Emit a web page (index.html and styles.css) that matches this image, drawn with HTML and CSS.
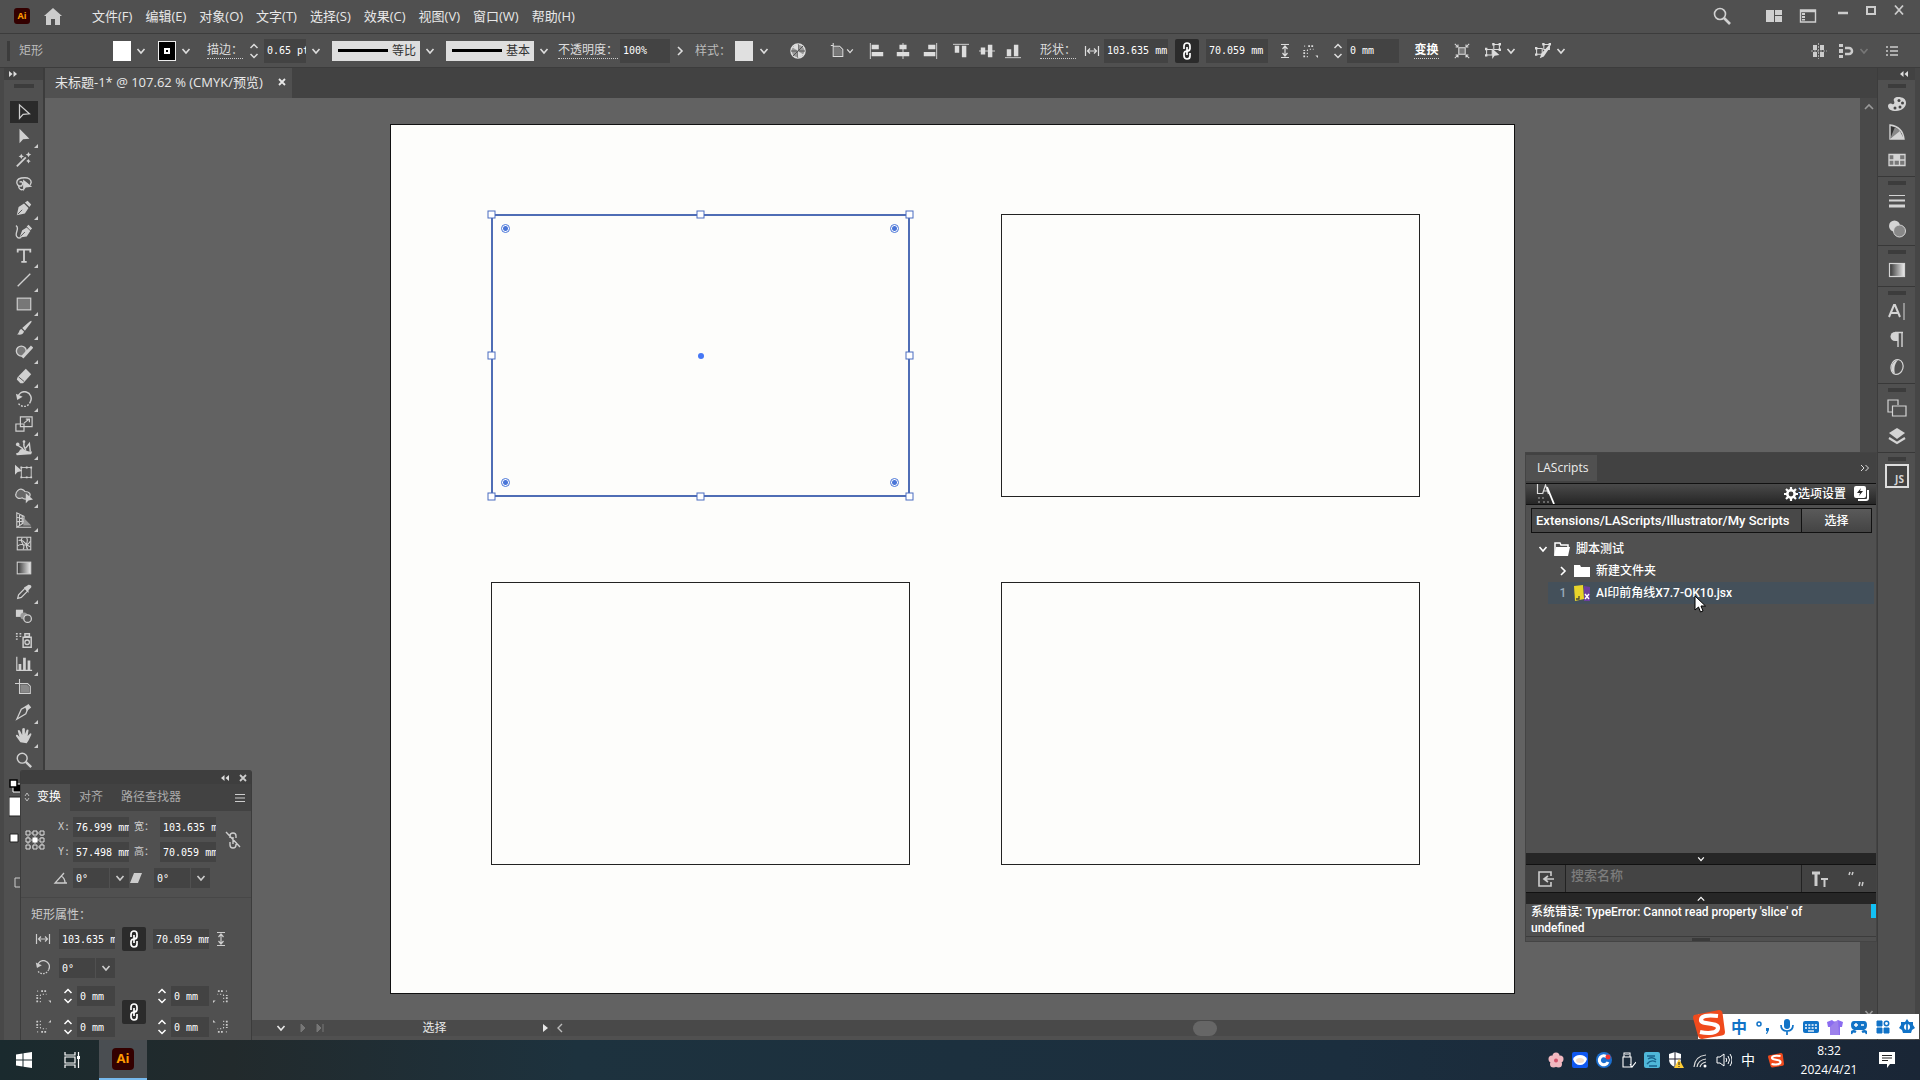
FILE: index.html
```html
<!DOCTYPE html>
<html lang="zh-CN">
<head>
<meta charset="utf-8">
<title>未标题-1* @ 107.62 % (CMYK/预览)</title>
<link rel="stylesheet" href="styles.css">
</head>
<body>
<svg class="sprite" aria-hidden="true">
  <symbol id="down" viewBox="0 0 10 10"><path d="M1.500 3l3.500 4L8.500 3" fill="none" stroke="currentColor" stroke-width="1.600"/></symbol>
  <symbol id="right" viewBox="0 0 10 10"><path d="M3 1l4 4-4 4" fill="none" stroke="currentColor" stroke-width="1.600"/></symbol>
  <symbol id="left" viewBox="0 0 10 10"><path d="M7 1L3 5l4 4" fill="none" stroke="currentColor" stroke-width="1.400"/></symbol>
  <symbol id="up" viewBox="0 0 10 10"><path d="M1 7l4-4 4 4" fill="none" stroke="currentColor" stroke-width="1.600"/></symbol>
  <symbol id="step" viewBox="0 0 10 16"><path d="M1.500 5L5 1.500 8.500 5M1.500 11L5 14.500 8.500 11" fill="none" stroke="currentColor" stroke-width="1.500"/></symbol>
  <symbol id="dleft" viewBox="0 0 10 8"><path d="M4.500 1v6L1 4zM9 1v6L5.500 4z" fill="currentColor"/></symbol>
  <symbol id="dright" viewBox="0 0 10 8"><path d="M1 1v6l3.500-3zM5.500 1v6L9 4z" fill="currentColor"/></symbol>
  <symbol id="dright-open" viewBox="0 0 10 8"><path d="M1 1l3 3-3 3M5.500 1l3 3-3 3" fill="none" stroke="currentColor"/></symbol>
  <symbol id="close" viewBox="0 0 10 10"><path d="M2 2l6 6M8 2L2 8" fill="none" stroke="currentColor" stroke-width="1.800"/></symbol>
  <symbol id="link" viewBox="0 0 12 20"><path d="M3 8V5a3 3 0 016 0v2.500a3 3 0 01-3 2.500M9 12v3a3 3 0 01-6 0v-2.500A3 3 0 016 10M6 6v8" fill="none" stroke="currentColor" stroke-width="1.700"/></symbol>
  <symbol id="w" viewBox="0 0 16 12"><path d="M1.500 1v10M14.500 1v10M3 6h10M6 3.500L3.500 6 6 8.500M10 3.500L12.500 6 10 8.500" fill="none" stroke="currentColor" stroke-width="1.200"/></symbol>
  <symbol id="h" viewBox="0 0 12 16"><path d="M2 1.500h8M2 14.500h8M6 3v10M3.500 6L6 3l2.500 3M3.500 10L6 13l2.500-3" fill="none" stroke="currentColor" stroke-width="1.200"/></symbol>
  <symbol id="corner" viewBox="0 0 18 16"><path d="M2.500 15V7M7 2.500h7" fill="none" stroke="currentColor" stroke-width="2" stroke-dasharray="2 1.500"/><path d="M2.500 2.500h1M6 15V8q0-2 2-2h5" fill="none" stroke="currentColor" stroke-width="1.200" stroke-dasharray="1.500 2"/><path d="M15 13h3v3z" fill="currentColor"/></symbol>
  <symbol id="mag" viewBox="0 0 20 20"><circle cx="8" cy="8" r="5.500" fill="none" stroke="currentColor" stroke-width="1.600"/><path d="M12 12l6 6" stroke="currentColor" stroke-width="2.600"/></symbol>
  <symbol id="rot" viewBox="0 0 20 20"><path d="M3 8a7.500 7.500 0 1114 4" fill="none" stroke="currentColor" stroke-width="1.600"/><path d="M17 12a7.500 7.500 0 01-13.500 1.500" fill="none" stroke="currentColor" stroke-width="1.500" stroke-dasharray="2 1.500"/><path d="M1 3l1.500 7 6-3.500z" fill="currentColor"/></symbol>
  <symbol id="sogou" viewBox="0 0 32 30"><path d="M1 6L26 1q3 0 3.500 3L32 23q0 3-3 3.500L9 30q-3 0-4-3L0 9q0-2 1-3z" fill="#f04a1c"/><path d="M25 7Q8 5 8 11c0 5 17 2 17 8 0 5-9 6-18 4" fill="none" stroke="#fff" stroke-width="4.200"/></symbol>
  <symbol id="t-sel" viewBox="0 0 20 20"><path d="M5 2v15l4-4.500 7-.5z" fill="none" stroke="currentColor" stroke-width="1.400"/></symbol>
  <symbol id="t-dir" viewBox="0 0 20 20"><path d="M5 2v16l4-4.500 7-.5z" fill="currentColor"/></symbol>
  <symbol id="t-wand" viewBox="0 0 20 20"><path d="M2 17L12 7" stroke="currentColor" stroke-width="2"/><path d="M7 3l1 2 2 1-2 1-1 2-1-2-2-1 2-1zM15 1l1 2 2 1-2 1-1 2-1-2-2-1 2-1zM15 9l1 1.500 1.500 1L16 12l-1 2-1-2-1.500-1 1.500-1z" fill="currentColor"/></symbol>
  <symbol id="t-lasso" viewBox="0 0 20 20"><path d="M8 12c-4 1-6-1-6-4C2 4 7 3 11 3s7 2 7 5l-1 3M5 8c3-2 5 2 2 4M4 12c0 4 3 5 5 4" fill="none" stroke="currentColor" stroke-width="1.500"/><path d="M9 5v13l3-4 7-1z" fill="currentColor"/></symbol>
  <symbol id="t-pen" viewBox="0 0 20 20"><path d="M2 18l2-9 6-4 5 5-4 6zM11 4l3-2 4 4-2 3z" fill="currentColor"/><path d="M3 17l5-5" stroke="#4d4d4d"/></symbol>
  <symbol id="t-curv" viewBox="0 0 20 20"><path d="M5 16l3-8 5-3 4 4-4 6zM13 4l2-2 4 4-2 2z" fill="currentColor"/><path d="M1 3c5 2-2 9 1 12 1 2 3 2 5 1" fill="none" stroke="currentColor" stroke-width="1.500"/><path d="M6 15l5-5" stroke="#4d4d4d"/></symbol>
  <symbol id="t-type" viewBox="0 0 20 20"><path d="M3 6V3h14v3M10 3v13M7 16.500h6" fill="none" stroke="currentColor" stroke-width="2"/></symbol>
  <symbol id="t-line" viewBox="0 0 20 20"><path d="M3 17L17 3" stroke="currentColor" stroke-width="1.500"/></symbol>
  <symbol id="t-rect" viewBox="0 0 20 20"><rect x="2.500" y="3.500" width="15" height="13" fill="#777" stroke="currentColor" stroke-width="1.300"/></symbol>
  <symbol id="t-brush" viewBox="0 0 20 20"><path d="M18 2q1 0 0 2l-7 9-3-3 8-7zM7 11l3 3c-1 4-5 4-8 3 3-1 2-5 5-6z" fill="currentColor"/></symbol>
  <symbol id="t-shaper" viewBox="0 0 20 20"><circle cx="7" cy="9" r="5.500" fill="#777" stroke="currentColor" stroke-width="1.500"/><path d="M8 16L19 4" stroke="currentColor" stroke-width="3.500"/></symbol>
  <symbol id="t-eraser" viewBox="0 0 20 20"><path d="M3 11L12 2l6 6-9 10H6l-4-4z" fill="currentColor"/><path d="M4 11l6 5" stroke="#4d4d4d"/></symbol>
  <symbol id="t-scale" viewBox="0 0 20 20"><path d="M6 2h13v11H6zM1 10h9v8H1z" fill="none" stroke="currentColor" stroke-width="1.300"/><path d="M10 9l5-4M12 4.500h4V8" fill="none" stroke="currentColor" stroke-width="1.300"/></symbol>
  <symbol id="t-width" viewBox="0 0 20 20"><path d="M1 16c5-1 3-5 7-5s3 3 11 3l-1 3-16 1z" fill="currentColor"/><path d="M3 7l6 4M10 4q-1 4 2 8M12 10l4-5 1 9" stroke="currentColor" stroke-width="1.500" fill="none"/><circle cx="3" cy="6" r="2" fill="currentColor"/><circle cx="10" cy="3" r="1.500" fill="currentColor"/></symbol>
  <symbol id="t-free" viewBox="0 0 20 20"><path d="M0 2v11l3-3 5-1z" fill="currentColor"/><rect x="7" y="5" width="11" height="11" fill="none" stroke="currentColor"/><path d="M6 4h2v2H6zM17 4h2v2h-2zM6 15h2v2H6zM17 15h2v2h-2zM12 4h2v2h-2zM12 15h2v2h-2z" fill="currentColor"/></symbol>
  <symbol id="t-shape" viewBox="0 0 20 20"><path d="M3 4c3-3 7-1 8 1 5 0 7 3 5 6s-6 3-8 1c-4 2-8-1-7-4 0-2 1-3 2-4z" fill="#666" stroke="currentColor" stroke-width="1.300"/><path d="M12 7v11l3-3 5-1z" fill="currentColor"/></symbol>
  <symbol id="t-persp" viewBox="0 0 20 20"><path d="M2 2v16l8-5V6zM2 7l8 2M2 12l8-1M5 3v13M8 5v9M2 18h16" fill="none" stroke="currentColor" stroke-width="1.200"/><path d="M11 9l7 7h-9z" fill="#999"/></symbol>
  <symbol id="t-mesh" viewBox="0 0 20 20"><rect x="2.500" y="2.500" width="15" height="14" fill="none" stroke="currentColor" stroke-width="1.200"/><path d="M3 12c5-5 9 4 14-5M4 6c7-2 6 5 13 7M8 3c-4 6 5 7 1 13M13 3c3 5-3 7 1 13" fill="none" stroke="currentColor" stroke-width="1.200"/></symbol>
  <linearGradient id="g1"><stop offset="0" stop-color="#333"/><stop offset="1" stop-color="#eee"/></linearGradient>
  <symbol id="t-grad" viewBox="0 0 20 20"><rect x="2.500" y="3.500" width="15" height="13" fill="url(#g1)" stroke="currentColor" stroke-width="1.200"/></symbol>
  <symbol id="t-drop" viewBox="0 0 20 20"><path d="M3 17l1-4 7-7 3 3-7 7z" fill="none" stroke="currentColor" stroke-width="1.400"/><path d="M10 5l2-1 3-2q4 0 3 3l-3 3v3z" fill="currentColor"/></symbol>
  <symbol id="t-blend" viewBox="0 0 20 20"><path d="M1 3h8v8H1z" fill="currentColor"/><circle cx="10" cy="10" r="4" fill="#999"/><circle cx="14" cy="13" r="4.200" fill="#555" stroke="currentColor" stroke-width="1.400"/></symbol>
  <symbol id="t-spray" viewBox="0 0 20 20"><path d="M9 7h9v11H9zM11 3h5v3h-5z" fill="none" stroke="currentColor" stroke-width="1.600"/><circle cx="13.500" cy="12.500" r="2.500" fill="none" stroke="currentColor" stroke-width="1.400"/><path d="M1 3h2M5 3h2M1 6h2M5 6h2M1 9h2" stroke="currentColor" stroke-width="1.500"/></symbol>
  <symbol id="t-graph" viewBox="0 0 20 20"><path d="M2 2v15h17" fill="none" stroke="currentColor" stroke-width="1.300"/><path d="M4 10h3v7H4zM9 3h3v14H9zM14 6h3v11h-3z" fill="currentColor"/></symbol>
  <symbol id="t-art" viewBox="0 0 20 20"><path d="M5 0v16h12V8l-3-3H0" fill="none" stroke="currentColor" stroke-width="1.200"/><path d="M6 6h7l3 3v6H6z" fill="#888"/></symbol>
  <symbol id="t-slice" viewBox="0 0 20 20"><path d="M2 18l5-11 5-3 2 3-2 5z" fill="none" stroke="currentColor" stroke-width="1.400"/><path d="M11 4l4-3 3 4-5 4z" fill="currentColor"/></symbol>
  <symbol id="t-hand" viewBox="0 0 20 20"><path d="M6 17L1 10q0-2 2-1l2 2L3 4q2-2 3 1l2 4V2q2-2 3 0v6l2-5q2-1 2 1l-1 6 3-3q2 0 1 2l-3 6-2 3z" fill="currentColor"/></symbol>
  <symbol id="win" viewBox="0 0 16 16"><path d="M0 2.500L6.500 1.500V7.500H0zM7.500 1.300L16 0v7.500H7.500zM0 8.500h6.500v6L0 13.500zM7.500 8.500H16V16l-8.500-1.300z" fill="#fff"/></symbol>
  <symbol id="folder" viewBox="0 0 16 14"><path d="M0 1h6l1 2h9v10H0z" fill="currentColor"/></symbol>
  <symbol id="doc" viewBox="0 0 20 20"><path d="M1 3h3M4 0v17h12V8l-4-4H4" fill="none" stroke="currentColor" stroke-width="1.300"/><path d="M5 5h6l4 4v7H5z" fill="#777"/></symbol>
  <symbol id="al" viewBox="0 0 18 18"><path d="M1.500 0v18" stroke="currentColor"/><path d="M3 2h8v5H3zM3 10h13v5H3z" fill="currentColor"/></symbol>
  <symbol id="ac" viewBox="0 0 18 18"><path d="M9 0v18" stroke="currentColor"/><path d="M5 2h8v5H5zM2 10h14v5H2z" fill="currentColor"/></symbol>
  <symbol id="nodes" viewBox="0 0 20 20"><path d="M6 6h8v8H6z" fill="#777" stroke="currentColor" stroke-width="1.300"/><path d="M1 1l4 4M19 1l-4 4M1 19l4-4M19 19l-4-4M2 5h3V2M18 5h-3V2M2 15h3v3M18 15h-3v3" fill="none" stroke="currentColor" stroke-width="1.300"/></symbol>
  <symbol id="iso" viewBox="0 0 20 20"><path d="M2 8h7v7H2zM11 2h7v6h-7z" fill="none" stroke="currentColor" stroke-width="1.300"/><path d="M0 6h3v3H0zM0 14h3v3H0zM9 0h3v3H9zM17 0h3v3h-3zM17 7h3v3h-3zM9 7v13l3-4 6-1z" fill="currentColor"/></symbol>
  <symbol id="edit" viewBox="0 0 20 20"><path d="M2 7h7v7H2zM11 2h7v6h-7z" fill="none" stroke="currentColor" stroke-width="1.300"/><path d="M0 5h3v3H0zM0 13h3v3H0zM9 0h3v3H9zM17 0h3v3h-3zM6 19l2-6 9-10 2 2-8 12z" fill="currentColor"/></symbol>
</svg>

<header class="menubar">
  <span class="ai small">Ai</span>
  <button class="plain home" aria-label="主页"><svg viewBox="0 0 20 18" class="i20"><path d="M10 1L1 9h2v9h5v-6h4v6h5V9h2z" fill="#ccc"/></svg></button>
  <nav class="menus">
    <button class="plain">文件(F)</button><button class="plain">编辑(E)</button><button class="plain">对象(O)</button><button class="plain">文字(T)</button><button class="plain">选择(S)</button><button class="plain">效果(C)</button><button class="plain">视图(V)</button><button class="plain">窗口(W)</button><button class="plain">帮助(H)</button>
  </nav>
  <div class="menu-right">
    <button class="plain search" aria-label="搜索"><svg class="i20"><use href="#mag"/></svg></button>
    <button class="plain" aria-label="排列文档"><svg class="i20" viewBox="0 0 20 20"><path d="M2 4h8v12H2zM11 4h7v5h-7zM11 10h7v6h-7z" fill="currentColor"/></svg></button>
    <button class="plain" aria-label="工作区"><svg class="i20" viewBox="0 0 20 20"><path d="M2.500 4h15v12h-15zM2 5.500h16" fill="none" stroke="currentColor" stroke-width="1.400"/><path d="M4 7h3v2H4zM4 10h3v2H4zM4 13h3v1.500H4z" fill="currentColor"/></svg></button>
  </div>
  <div class="win-buttons">
    <button class="plain" aria-label="最小化"><svg class="i12" viewBox="0 0 12 12"><path d="M1 9h10" stroke="currentColor" stroke-width="2.500"/></svg></button>
    <button class="plain" aria-label="最大化"><svg class="i12" viewBox="0 0 12 12"><rect x="2" y="3" width="8" height="7" fill="none" stroke="currentColor" stroke-width="2"/></svg></button>
    <button class="plain" aria-label="关闭"><svg class="i12" viewBox="0 0 12 12"><path d="M2 1.500l8 9M10 1.500l-8 9" stroke="currentColor" stroke-width="1.800"/></svg></button>
  </div>
</header>

<section class="controlbar" aria-label="控制">
  <span class="grip-v"></span>
  <span class="dim">矩形</span>
  <button class="swatch" aria-label="填色"></button>
  <button class="plain chev" aria-label="填色菜单"><svg class="i10"><use href="#down"/></svg></button>
  <button class="swatch stroke" aria-label="描边颜色"></button>
  <button class="plain chev" aria-label="描边颜色菜单"><svg class="i10"><use href="#down"/></svg></button>
  <label class="dotted" for="sw">描边：</label>
  <button class="plain" aria-label="调整粗细"><svg class="step"><use href="#step"/></svg></button>
  <input id="sw" class="field" value="0.65 pt">
  <button class="plain chev" aria-label="粗细菜单"><svg class="i10"><use href="#down"/></svg></button>
  <select class="profile" aria-label="宽度配置"><option>等比</option></select>
  <svg class="i10 chev"><use href="#down"/></svg>
  <select class="profile" aria-label="画笔"><option>基本</option></select>
  <svg class="i10 chev"><use href="#down"/></svg>
  <label class="dotted" for="op">不透明度：</label>
  <input id="op" class="field" value="100%">
  <button class="plain chev" aria-label="不透明度滑块"><svg class="i10"><use href="#right"/></svg></button>
  <span class="dim">样式：</span>
  <button class="swatch style" aria-label="图形样式"></button>
  <button class="plain chev" aria-label="样式菜单"><svg class="i10"><use href="#down"/></svg></button>
  <button class="plain" aria-label="重新着色"><svg class="i16" viewBox="0 0 16 16"><circle cx="8" cy="8" r="7" fill="#999" stroke="currentColor" stroke-width="1.500"/><path d="M8 1v14M1 8h14M3 3l10 10M13 3L3 13" stroke="#555"/><path d="M8 8L2 4 8 1zM8 8l6 4-6 3z" fill="currentColor"/></svg></button>
  <button class="plain" aria-label="对齐到"><svg class="i16"><use href="#doc"/></svg><svg class="i8"><use href="#down"/></svg></button>
  <button class="plain" aria-label="左对齐"><svg class="i16"><use href="#al"/></svg></button>
  <button class="plain" aria-label="水平居中"><svg class="i16"><use href="#ac"/></svg></button>
  <button class="plain" aria-label="右对齐"><svg class="i16 flip-h"><use href="#al"/></svg></button>
  <button class="plain" aria-label="顶对齐"><svg class="i16 turn"><use href="#al"/></svg></button>
  <button class="plain" aria-label="垂直居中"><svg class="i16 turn"><use href="#ac"/></svg></button>
  <button class="plain" aria-label="底对齐"><svg class="i16 turn-b"><use href="#al"/></svg></button>
  <label class="dotted" for="sh">形状：</label>
  <svg class="i16"><use href="#w"/></svg>
  <input id="sh" class="field" value="103.635 mm">
  <button class="linkbtn" aria-label="约束比例"><svg class="lk"><use href="#link"/></svg></button>
  <input class="field" aria-label="高度" value="70.059 mm">
  <svg class="i16 mid"><use href="#h"/></svg>
  <svg class="i16"><use href="#corner"/></svg>
  <button class="plain" aria-label="调整圆角"><svg class="step"><use href="#step"/></svg></button>
  <input class="field" aria-label="圆角半径" value="0 mm">
  <button class="plain dotted bright mid">变换</button>
  <button class="plain" aria-label="边界"><svg class="i16"><use href="#nodes"/></svg></button>
  <button class="plain pair" aria-label="隔离"><svg class="i16"><use href="#iso"/></svg><svg class="i10"><use href="#down"/></svg></button>
  <button class="plain pair" aria-label="编辑"><svg class="i16"><use href="#edit"/></svg><svg class="i10"><use href="#down"/></svg></button>
  <span class="cb-right">
    <button class="plain" aria-label="像素网格"><svg class="i16" viewBox="0 0 16 16"><path d="M2 2h4v5H2zM9 2h4v5H9zM2 9h4v5H2zM9 9h4v5H9z" fill="currentColor"/><path d="M7.500 0v16M0 8h16" stroke="currentColor" stroke-dasharray="2 1" opacity=".7"/></svg></button>
    <button class="plain pair" aria-label="对齐像素"><svg class="i16" viewBox="0 0 16 16"><path d="M1 1h4v3H1zM1 6h4v4H1zM1 12h4v3H1z" fill="currentColor"/><path d="M7 5h4a3 3 0 010 6H7" fill="none" stroke="currentColor" stroke-width="2.500"/></svg><svg class="i10 faint"><use href="#down"/></svg></button>
    <button class="plain" aria-label="菜单"><svg class="i12" viewBox="0 0 12 12"><path d="M0 2h2M4 2h8M0 6h2M4 6h8M0 10h2M4 10h8" stroke="currentColor" stroke-width="1.500"/></svg></button>
  </span>
</section>

<main class="workspace">
  <aside class="toolbar" aria-label="工具">
    <div class="bar-head"><svg class="dbl"><use href="#dright"/></svg></div>
    <span class="grip"></span>
    <div class="tools">
      <button class="tool on" aria-label="选择工具"><svg><use href="#t-sel"/></svg></button>
      <button class="tool more" aria-label="直接选择"><svg><use href="#t-dir"/></svg></button>
      <button class="tool" aria-label="魔棒"><svg><use href="#t-wand"/></svg></button>
      <button class="tool" aria-label="套索"><svg><use href="#t-lasso"/></svg></button>
      <button class="tool more" aria-label="钢笔"><svg><use href="#t-pen"/></svg></button>
      <button class="tool" aria-label="曲率"><svg><use href="#t-curv"/></svg></button>
      <button class="tool more" aria-label="文字"><svg><use href="#t-type"/></svg></button>
      <button class="tool more" aria-label="直线段"><svg><use href="#t-line"/></svg></button>
      <button class="tool more" aria-label="矩形"><svg><use href="#t-rect"/></svg></button>
      <button class="tool more" aria-label="画笔"><svg><use href="#t-brush"/></svg></button>
      <button class="tool more" aria-label="Shaper"><svg><use href="#t-shaper"/></svg></button>
      <button class="tool more" aria-label="橡皮擦"><svg><use href="#t-eraser"/></svg></button>
      <button class="tool more" aria-label="旋转"><svg><use href="#rot"/></svg></button>
      <button class="tool more" aria-label="比例缩放"><svg><use href="#t-scale"/></svg></button>
      <button class="tool more" aria-label="宽度"><svg><use href="#t-width"/></svg></button>
      <button class="tool more" aria-label="自由变换"><svg><use href="#t-free"/></svg></button>
      <button class="tool more" aria-label="形状生成器"><svg><use href="#t-shape"/></svg></button>
      <button class="tool more" aria-label="透视网格"><svg><use href="#t-persp"/></svg></button>
      <button class="tool" aria-label="网格"><svg><use href="#t-mesh"/></svg></button>
      <button class="tool" aria-label="渐变"><svg><use href="#t-grad"/></svg></button>
      <button class="tool more" aria-label="吸管"><svg><use href="#t-drop"/></svg></button>
      <button class="tool" aria-label="混合"><svg><use href="#t-blend"/></svg></button>
      <button class="tool more" aria-label="符号喷枪"><svg><use href="#t-spray"/></svg></button>
      <button class="tool more" aria-label="柱形图"><svg><use href="#t-graph"/></svg></button>
      <button class="tool" aria-label="画板"><svg><use href="#t-art"/></svg></button>
      <button class="tool more" aria-label="切片"><svg><use href="#t-slice"/></svg></button>
      <button class="tool more" aria-label="抓手"><svg><use href="#t-hand"/></svg></button>
      <button class="tool" aria-label="缩放"><svg><use href="#mag"/></svg></button>
    </div>
    <svg class="colors" viewBox="0 0 30 130"><path d="M4 8h8v8H4z" fill="#000" stroke="#fff"/><path d="M1 4h7v7H1z" fill="#fff" stroke="#000" stroke-width="1.500"/><path d="M0 21h22v19H0z" fill="#fff" stroke="#222"/><path d="M1 58h8v8H1z" fill="#fff" stroke="#222"/><path d="M6 102h12v9H6z" fill="none" stroke="#ccc"/></svg>
  </aside>

  <section class="document">
    <div class="tabs">
      <div class="tab"><span>未标题-1* @ 107.62 % (CMYK/预览)</span><button class="plain" aria-label="关闭文档"><svg class="i10"><use href="#close"/></svg></button></div>
    </div>
    <div class="view">
      <div class="canvas">
        <div class="artboard">
          <div class="shape a selected">
            <svg class="handles" aria-hidden="true">
              <g class="hn">
                <rect x="0" y="0" width="7" height="7"/><rect x="50%" y="0" width="7" height="7"/><rect x="100%" y="0" width="7" height="7"/>
                <rect x="0" y="50%" width="7" height="7"/><rect x="100%" y="50%" width="7" height="7"/>
                <rect x="0" y="100%" width="7" height="7"/><rect x="50%" y="100%" width="7" height="7"/><rect x="100%" y="100%" width="7" height="7"/>
              </g>
              <circle class="mid-dot" cx="50%" cy="50%" r="3"/>
            </svg>
            <i class="widget tl"></i><i class="widget tr"></i><i class="widget bl"></i><i class="widget br"></i>
          </div>
          <div class="shape b"></div>
          <div class="shape c"></div>
          <div class="shape d"></div>
        </div>
      </div>
      <div class="vscroll"><svg class="i10"><use href="#up"/></svg><svg class="i10"><use href="#down"/></svg></div>
    </div>
    <footer class="status">
      <div class="status-info"><svg class="i10"><use href="#down"/></svg><svg class="nav2" viewBox="0 0 30 10"><path d="M3 1v8l4-4zM19 1v8l4-4zM25 1v8" fill="#777" stroke="#777"/></svg><span class="status-text">选择</span><svg class="i10" viewBox="0 0 10 10"><path d="M2 1l5 4-5 4z" fill="currentColor"/></svg></div>
      <div class="hscroll"><svg class="i10 dim"><use href="#left"/></svg><span class="thumb"></span></div>
    </footer>
  </section>

  <aside class="dock" aria-label="面板">
    <div class="bar-head end"><svg class="dbl"><use href="#dleft"/></svg></div>
    <div class="dock-group">
      <button class="plain" aria-label="颜色"><svg class="i20" viewBox="0 0 20 20"><path d="M11 3c5 0 8 2 8 6s-4 8-10 8c-5 0-8-2-8-5 0-2 2-3 4-2s3-1 2-3 1-4 4-4z" fill="currentColor"/><circle cx="12" cy="6.500" r="1.500" fill="#444"/><circle cx="15.500" cy="9" r="1.500" fill="#444"/><circle cx="13" cy="13" r="1.500" fill="#444"/><circle cx="8" cy="14" r="1.500" fill="#444"/></svg></button>
      <button class="plain" aria-label="颜色参考"><svg class="i20" viewBox="0 0 20 20"><path d="M3 3v14h14C16 9 11 4 3 3z" fill="#333" stroke="currentColor" stroke-width="1.400"/><path d="M3 17L12 7l5 10z" fill="currentColor"/><path d="M3 17l5-12 5 4z" fill="#888"/></svg></button>
      <button class="plain" aria-label="色板"><svg class="i20" viewBox="0 0 20 20"><path d="M2 4.500h16v11H2z" fill="#777" stroke="currentColor" stroke-width="1.300"/><path d="M7 5v10M12.500 5v10M2 10h16" stroke="currentColor" stroke-width="1.300"/><path d="M7 5h5v5H7z" fill="currentColor"/></svg></button>
    </div>
    <div class="dock-group">
      <button class="plain" aria-label="描边"><svg class="i20" viewBox="0 0 20 20"><path d="M2 4.500h16" stroke="currentColor"/><path d="M2 9.500h16" stroke="currentColor" stroke-width="2"/><path d="M2 15h16" stroke="currentColor" stroke-width="3"/></svg></button>
      <button class="plain" aria-label="透明度"><svg class="i20" viewBox="0 0 20 20"><circle cx="7.500" cy="7" r="5.500" fill="currentColor"/><circle cx="12.500" cy="12" r="6" fill="#888" stroke="currentColor"/></svg></button>
    </div>
    <div class="dock-group">
      <button class="plain" aria-label="渐变"><svg class="i20" viewBox="0 0 20 20"><use href="#t-grad"/></svg></button>
    </div>
    <div class="dock-group">
      <button class="plain" aria-label="字符"><svg class="i20" viewBox="0 0 20 20"><path d="M2 16L7 4h1l5 12M4 12h7" fill="none" stroke="currentColor" stroke-width="2"/><path d="M17 2v17" stroke="currentColor"/></svg></button>
      <button class="plain" aria-label="段落"><svg class="i20" viewBox="0 0 20 20"><path d="M11 3v15M15 3v15M8 3.500h8" fill="none" stroke="currentColor" stroke-width="1.400"/><path d="M11 3H8a4 4 0 000 9h3z" fill="currentColor"/></svg></button>
      <button class="plain" aria-label="OpenType"><svg class="i20" viewBox="0 0 20 20"><ellipse cx="10" cy="10" rx="6" ry="7.500" transform="rotate(15 10 10)" fill="none" stroke="currentColor" stroke-width="1.200"/><path d="M11 3C4 4 2 14 8 17 7 12 7 8 11 3z" fill="currentColor"/></svg></button>
    </div>
    <div class="dock-group">
      <button class="plain" aria-label="画板"><svg class="i20" viewBox="0 0 20 20"><path d="M5 14H1V2h10v5M5.500 8H19v10H5.500z" fill="none" stroke="currentColor" stroke-width="1.200"/></svg></button>
      <button class="plain" aria-label="图层"><svg class="i20" viewBox="0 0 20 20"><path d="M10 2l8 5-8 6-8-6z" fill="currentColor"/><path d="M2 12l8 5 8-5" fill="none" stroke="currentColor" stroke-width="2.200"/></svg></button>
    </div>
    <div class="dock-group">
      <button class="js" aria-label="LAScripts">JS</button>
    </div>
  </aside>
</main>

<section class="transform-panel" aria-label="变换面板">
  <div class="tp-head"><svg class="dbl"><use href="#dleft"/></svg><button class="plain" aria-label="关闭面板"><svg class="i10"><use href="#close"/></svg></button></div>
  <div class="tp-tabs">
    <button class="tp-tab on"><svg class="ud" viewBox="0 0 6 10"><path d="M1 4l2-3 2 3M1 6l2 3 2-3" fill="none" stroke="#bbb"/></svg>变换</button>
    <button class="tp-tab">对齐</button>
    <button class="tp-tab">路径查找器</button>
    <button class="plain tp-menu" aria-label="面板菜单"><svg class="i10" viewBox="0 0 10 10"><path d="M0 1.500h10M0 5h10M0 8.500h10" stroke="currentColor"/></svg></button>
  </div>
  <div class="tp-pos">
    <svg class="i20" viewBox="0 0 20 20"><path d="M3 3h14v14H3zM10 3v14M3 10h14" fill="none" stroke="#ccc" stroke-dasharray="2 1"/><g fill="#505050" stroke="#ddd"><path d="M1 1h4v4H1zM8 1h4v4H8zM15 1h4v4h-4zM1 8h4v4H1zM15 8h4v4h-4zM1 15h4v4H1zM8 15h4v4H8zM15 15h4v4h-4z"/></g><path d="M7.500 7.500h5v5h-5z" fill="#fff"/></svg>
    <div class="pos-grid">
      <label for="px">X:</label><input id="px" class="field" value="76.999 mm"><label for="pw">宽：</label><input id="pw" class="field" value="103.635 mm">
      <label for="py">Y:</label><input id="py" class="field" value="57.498 mm"><label for="ph">高：</label><input id="ph" class="field" value="70.059 mm">
    </div>
    <button class="plain unlink" aria-label="取消约束"><svg class="i20" viewBox="0 0 20 20"><path d="M7 8V6a3 3 0 016 0v2M13 12v3a3 3 0 01-6 0v-3M10 7v7M3 2l14 15" fill="none" stroke="#ccc" stroke-width="1.400"/></svg></button>
  </div>
  <div class="tp-angle">
    <svg class="i16" viewBox="0 0 16 16"><path d="M14 13H2L11 3M8 6q4 2 4 7" fill="none" stroke="#ccc" stroke-width="1.300"/></svg>
    <span class="combo"><input class="field" aria-label="角度" value="0°"><button class="plain" aria-label="角度菜单"><svg class="i10"><use href="#down"/></svg></button></span>
    <svg class="i16" viewBox="0 0 16 16"><path d="M5 3h8L9 13H1z" fill="#ccc"/></svg>
    <span class="combo"><input class="field" aria-label="倾斜" value="0°"><button class="plain" aria-label="倾斜菜单"><svg class="i10"><use href="#down"/></svg></button></span>
  </div>
  <h2 class="tp-title">矩形属性：</h2>
  <div class="tp-props">
    <svg class="i16"><use href="#w"/></svg><input class="field" aria-label="矩形宽" value="103.635 mm">
    <button class="linkbtn" aria-label="约束宽高"><svg class="lk"><use href="#link"/></svg></button>
    <input class="field" aria-label="矩形高" value="70.059 mm"><svg class="i16"><use href="#h"/></svg>
    <svg class="i16"><use href="#rot"/></svg><span class="combo"><input class="field" aria-label="矩形角度" value="0°"><button class="plain" aria-label="矩形角度菜单"><svg class="i10"><use href="#down"/></svg></button></span>
  </div>
  <div class="tp-corners">
    <svg class="i16"><use href="#corner"/></svg><span class="radius"><svg class="step"><use href="#step"/></svg><input class="field" aria-label="左上" value="0 mm"></span>
    <button class="linkbtn" aria-label="约束圆角"><svg class="lk"><use href="#link"/></svg></button>
    <span class="radius"><svg class="step"><use href="#step"/></svg><input class="field" aria-label="右上" value="0 mm"></span><svg class="i16 flip-h"><use href="#corner"/></svg>
    <svg class="i16 flip-v"><use href="#corner"/></svg><span class="radius"><svg class="step"><use href="#step"/></svg><input class="field" aria-label="左下" value="0 mm"></span>
    <span class="radius last"><svg class="step"><use href="#step"/></svg><input class="field" aria-label="右下" value="0 mm"></span><svg class="i16 turn-c"><use href="#corner"/></svg>
  </div>
</section>

<section class="scripts-panel" aria-label="LAScripts">
  <div class="sp-head"><button class="sp-tab">LAScripts</button><svg class="dbl"><use href="#dright-open"/></svg></div>
  <div class="sp-brand">
    <svg class="i20" viewBox="0 0 20 20" role="img" aria-label="LA"><path d="M1.500 0v9.500H6M6.500 10l3-9 3 9M8 7h4" fill="none" stroke="#ddd" stroke-width="1.200"/><path d="M11 3l7 17" stroke="#fff" stroke-width="1.800"/><path d="M2 14h2M6 14h2M2 18h2M7 18h2M11 18h2" stroke="#aaa"/></svg>
    <button class="plain opts"><svg class="i14" viewBox="0 0 14 14"><circle cx="7" cy="7" r="3.700" fill="none" stroke="#fff" stroke-width="2.600"/><path d="M7 0v3M7 11v3M0 7h3M11 7h3M2 2l2 2M10 10l2 2M12 2l-2 2M4 10l-2 2" stroke="#fff" stroke-width="2.200"/></svg>选项设置</button>
    <button class="plain" aria-label="快捷"><svg class="i16" viewBox="0 0 16 16"><rect width="12" height="12" rx="2" fill="#fff"/><path d="M14 4v8q0 2-2 2H4" fill="none" stroke="#fff" stroke-width="2"/><path d="M7 2L3 7h3l-1 3 4-5H6z" fill="#222"/></svg></button>
  </div>
  <div class="sp-path"><input class="path" aria-label="脚本路径" value="Extensions/LAScripts/Illustrator/My Scripts"><button class="pick">选择</button></div>
  <ul class="tree">
    <li class="row l1"><svg class="i10"><use href="#down"/></svg><svg class="i16" viewBox="0 0 16 14"><path d="M1 13V1h5l1 2h7v2" fill="none" stroke="#fff" stroke-width="1.500"/><path d="M2 5h14l-2 9H0z" fill="#fff"/></svg><span>脚本测试</span></li>
    <li class="row l2"><svg class="i10"><use href="#right"/></svg><svg class="i16"><use href="#folder"/></svg><span>新建文件夹</span></li>
    <li class="row l2 current"><span class="num">1</span><svg class="i16" viewBox="0 0 16 16"><path d="M0 1l9-1 1 14-9 2z" fill="#e8d42a"/><path d="M10 1l6 1v14h-6z" fill="#6b3fa0"/><path d="M11 9l4 5M15 9l-4 5" stroke="#fff" stroke-width="1.400"/><path d="M2 14h3v-3" fill="none" stroke="#443" stroke-width="1.300"/></svg><span>AI印前角线X7.7-OK10.jsx</span></li>
  </ul>
  <div class="bar"><svg class="i8"><use href="#down"/></svg></div>
  <div class="sp-search">
    <button class="plain tool-l" aria-label="导入"><svg class="i16" viewBox="0 0 16 16"><path d="M13 5V1H1v14h12v-4" fill="none" stroke="currentColor" stroke-width="1.600"/><path d="M16 8H7M10 5L6 8l4 3" fill="none" stroke="currentColor" stroke-width="1.700"/></svg></button>
    <input class="find" placeholder="搜索名称" aria-label="搜索名称">
    <button class="plain" aria-label="大小写"><svg class="i16" viewBox="0 0 16 16"><path d="M0 2h8M4 1v14" stroke="currentColor" stroke-width="3"/><path d="M9 8h7M12.500 8v8" stroke="currentColor" stroke-width="2"/></svg></button>
    <button class="plain" aria-label="引号"><svg class="i16" viewBox="0 0 16 16"><path d="M2 1L1 4M5 1L4 4M12 11l-1 4M15 11l-1 4" stroke="currentColor" stroke-width="1.500"/></svg></button>
  </div>
  <div class="bar"><svg class="i8"><use href="#up"/></svg></div>
  <p class="error">系统错误: TypeError: Cannot read property 'slice' of undefined</p>
  <div class="sp-foot"></div>
</section>

<svg class="cursor" viewBox="0 0 12 18" aria-hidden="true"><path d="M1 1v14l3.500-3 2 5 2.500-1-2-5h4.500z" fill="#fff" stroke="#000"/></svg>

<section class="ime" aria-label="输入法">
  <svg class="ime-logo"><use href="#sogou"/></svg>
  <button class="plain zh">中</button>
  <button class="plain" aria-label="标点"><svg class="i16" viewBox="0 0 16 16"><circle cx="4" cy="5" r="2" fill="none" stroke="currentColor" stroke-width="1.500"/><path d="M11 9h3v2l-2 4h-1l1-3h-1z" fill="currentColor"/></svg></button>
  <button class="plain" aria-label="语音"><svg class="i16" viewBox="0 0 16 16"><rect x="5" y="0" width="6" height="10" rx="3" fill="currentColor"/><path d="M2 6q0 6 6 6t6-6M8 12v4" fill="none" stroke="currentColor" stroke-width="1.700"/></svg></button>
  <button class="plain" aria-label="键盘"><svg class="i16" viewBox="0 0 16 16"><rect x="0" y="2" width="16" height="12" rx="2" fill="currentColor"/><path d="M2 6h12M2 9h12" stroke="#fff" stroke-width="1.500" stroke-dasharray="2 1.300"/><path d="M5 12h6" stroke="#fff" stroke-width="1.300"/></svg></button>
  <button class="plain" aria-label="皮肤"><svg class="i16" viewBox="0 0 16 16"><path d="M5 1q3 3 6 0l5 2-1 5h-2v8H3V8H1L0 3z" fill="#8b6cf0"/><path d="M3 8l6-6 2-1 1 15H3z" fill="#a58ae8" opacity=".7"/></svg></button>
  <button class="plain" aria-label="游戏"><svg class="i16" viewBox="0 0 16 16"><path d="M3 2h10q3 0 3 4t-3 5H3Q0 10 0 6t3-4z" fill="currentColor"/><path d="M0 15q1-4 5-2M16 15q-1-4-5-2" fill="none" stroke="currentColor" stroke-width="2.500"/><path d="M3 6h4M5 4v4M10 6h3" stroke="#fff" stroke-width="1.400"/></svg></button>
  <button class="plain" aria-label="工具箱"><svg class="i16" viewBox="0 0 16 16"><path d="M2 2h5v5H2zM2 9h5v5H2zM9 9h5v5H9z" fill="currentColor" stroke="currentColor"/><circle cx="11.500" cy="4.500" r="2.200" fill="none" stroke="currentColor" stroke-width="1.500"/></svg></button>
  <button class="plain" aria-label="设置"><svg class="i16" viewBox="0 0 16 16"><path d="M8 0l2 3h4v3l2 3-3 2-1 3H4l-1-3-3-2 2-3V3h4z" fill="currentColor"/><circle cx="8" cy="8" r="3" fill="#fff"/><path d="M8 5v9" stroke="currentColor" stroke-width="1.700"/></svg></button>
</section>

<footer class="taskbar">
  <button class="plain task" aria-label="开始"><svg class="i16"><use href="#win"/></svg></button>
  <button class="plain task" aria-label="任务视图"><svg class="i16" viewBox="0 0 16 16"><path d="M1 0v3h10V0M1 16v-3h10v3M1 5h10v6H1zM14.500 0v16" fill="none" stroke="#fff" stroke-width="1.200"/><path d="M13 4h3v3h-3z" fill="#fff"/></svg></button>
  <button class="plain task active" aria-label="Illustrator"><span class="ai">Ai</span></button>
  <div class="tray">
    <svg class="i16" viewBox="0 0 16 16"><g fill="#f2b8c0"><circle cx="8" cy="4" r="3.500"/><circle cx="12" cy="7" r="3.500"/><circle cx="10.500" cy="12" r="3.500"/><circle cx="5.500" cy="12" r="3.500"/><circle cx="4" cy="7" r="3.500"/></g><circle cx="8" cy="8.500" r="2" fill="#d4526a"/></svg>
    <svg class="i16" viewBox="0 0 16 16"><rect width="16" height="16" rx="2" fill="#1058f0"/><path d="M1 7q2-4 7-4t7 4q-2 6-7 6T1 7z" fill="#fff"/><ellipse cx="8" cy="8.500" rx="4" ry="2.500" fill="#f3dcc8"/></svg>
    <svg class="i16" viewBox="0 0 16 16"><circle cx="8" cy="8" r="8" fill="#1b6fd0"/><path d="M11 5a4.500 4.500 0 101 5" fill="none" stroke="#fff" stroke-width="3"/><circle cx="12" cy="5" r="2.500" fill="#e33"/></svg>
    <svg class="i16" viewBox="0 0 16 16"><path d="M4 5V1h6v4M3 5h8v10H3zM6 2v1M8 2v1M10 12l2 3 4-5" fill="none" stroke="#fff" stroke-width="1.100"/></svg>
    <svg class="i16" viewBox="0 0 16 16"><rect width="16" height="16" rx="2" fill="#4fb7d8"/><path d="M3 4h8M4 7q5-3 8 1M3 12q4-5 9-2M5 14h8" stroke="#17628a" fill="none" stroke-width="1.300"/></svg>
    <svg class="i16" viewBox="0 0 16 16"><path d="M7 0l6 2v5q0 6-6 8-6-2-6-8V2z" fill="#fff"/><path d="M7 0v15M1 7h12" stroke="#223"/><path d="M11 7l5 9H6z" fill="#fc3"/><path d="M11 10v3M11 14v1" stroke="#222"/></svg>
    <svg class="i16" viewBox="0 0 16 16"><path d="M2 15Q3 4 14 3M5 15q1-7 9-8M8 15q1-4 6-5" fill="none" stroke="#ddd" stroke-width="1.200"/><circle cx="13" cy="14" r="1.500" fill="#fff"/></svg>
    <svg class="i16" viewBox="0 0 16 16"><path d="M1 5h3l4-3v12l-4-3H1zM10 6q1.500 2 0 4M12 4q3 4 0 8M14 2q4 6 0 12" fill="none" stroke="#fff"/></svg>
    <span class="ime-zh">中</span>
    <svg class="i16"><use href="#sogou"/></svg>
  </div>
  <div class="clock"><span>8:32</span><span>2024/4/21</span></div>
  <button class="plain note" aria-label="通知"><svg class="i16" viewBox="0 0 16 16"><path d="M0 0h16v12h-5l-3 4v-4H0z" fill="#fff"/><path d="M3 3.500h10M3 6h10M3 8.500h6" stroke="#222"/></svg></button>
</footer>
</body>
</html>
```
FILE: styles.css
```css
:root {
  --panel: #505050;
  --dark: #424242;
  --field: #434343;
  --canvas: #626262;
  --line: #3c3c3c;
  --ui: "Open Sans", "Noto Sans CJK SC", sans-serif;
  --mono: "DejaVu Sans Mono", "Noto Sans CJK SC", monospace;
}

* { box-sizing: border-box; }

body {
  margin: 0;
  min-height: 100vh;
  display: grid;
  grid-template-rows: 34px 34px 1fr 40px;
  grid-template-columns: minmax(0, 1fr);
  background: var(--panel);
  color: #e8e8e8;
  font: 12px/16px var(--ui);
  overflow: hidden;
  position: relative;
}

.sprite { position: absolute; width: 0; height: 0; }
svg { display: block; flex: none; }
.i8 { width: 8px; height: 8px; }
.i10 { width: 10px; height: 10px; }
.i12 { width: 12px; height: 12px; }
.i14 { width: 14px; height: 14px; }
.i16 { width: 16px; height: 16px; }
.i20 { width: 20px; height: 20px; }
.step { width: 10px; height: 16px; }
.lk { width: 12px; height: 20px; }
.dbl { width: 10px; height: 8px; color: #ddd; }
.flip-h { transform: scaleX(-1); }
.flip-v { transform: scaleY(-1); }
.turn { transform: matrix(0, 1, 1, 0, 0, 0); }
.turn-b { transform: rotate(-90deg); }
.turn-c { transform: rotate(180deg); }
.dim { color: #bbb; }
.faint { color: #777; }

.ai {
  width: 22px;
  height: 22px;
  border-radius: 4px;
  background: #330000;
  color: #ff9a00;
  font: 700 13px/21px var(--ui);
  text-align: center;
}
.ai.small { width: 16px; height: 16px; border-radius: 3px; font-size: 9px; line-height: 16px; }

button, input, select { font: inherit; color: inherit; }
.plain {
  border: 0;
  padding: 0;
  background: none;
  display: flex;
  align-items: center;
  justify-content: center;
}
.field {
  width: 100%;
  min-width: 0;
  height: 20px;
  border: 0;
  padding: 0 0 0 3px;
  background: var(--field);
  color: #fff;
  font: 10px/16px var(--mono);
}
.linkbtn {
  width: 24px;
  height: 24px;
  border: 0;
  padding: 0;
  border-radius: 2px;
  background: #2b2b2b;
  color: #fff;
  display: grid;
  place-items: center;
}

/* menu bar */
.menubar {
  display: flex;
  align-items: center;
  padding: 0 0 1px 14px;
  border-bottom: 1px solid var(--line);
  font-size: 13px;
}
.home { margin: 0 29px 0 13px; }
.menus { display: flex; gap: 13px; flex: 1; }
.menu-right { display: flex; gap: 14px; color: #d0d0d0; }
.menu-right .search { margin-right: 18px; }
.win-buttons {
  display: flex;
  gap: 16px;
  align-self: flex-start;
  margin: 4px 15px 0 19px;
  color: #ccc;
}

/* control bar: each track is one control */
.controlbar {
  display: grid;
  grid-template-columns:
    12px 94px 18px 27px 18px 31px 42px 15px 42px 26px
    88px 26px 88px 24px 62px 50px 25px 40px 19px 36px
    40px 39px 26px 27px 31px 26px 26px 35px
    44px 20px 64px 38px 62px 34px 31px 14px 52px
    55px 31px 50px minmax(0, 34px) minmax(0, 1fr);
  align-items: center;
  padding-left: 7px;
  border-bottom: 1px solid var(--line);
  color: #ddd;
}
.controlbar > * { justify-self: start; }
.controlbar .field { justify-self: stretch; height: 24px; }
.controlbar .chev { margin-left: 5px; }
.controlbar .mid, .controlbar .linkbtn { justify-self: center; }
.controlbar label, .controlbar .dim { white-space: nowrap; }
.grip-v { width: 3px; height: 20px; background: var(--line); }
.swatch { width: 18px; height: 20px; border: 0; padding: 0; background: #fff; }
.swatch.style { background: #e0e0e0; }
.swatch.stroke { background: linear-gradient(#000, #000) center / 2px 2px no-repeat, linear-gradient(#fff, #fff) center / 6px 6px no-repeat, #000; border: 1px solid #eee; }
.dotted { border-bottom: 1px dotted #ccc; }
.dotted.bright { color: #fff; font-weight: 600; }
.pair { gap: 5px; }
.profile {
  appearance: none;
  width: 88px;
  height: 20px;
  border: 0;
  padding: 0 0 0 60px;
  background: linear-gradient(#000, #000) 6px center / 50px 3px no-repeat, #dedede;
  color: #333;
}
.controlbar .cb-right {
  justify-self: end;
  display: flex;
  align-items: center;
  gap: 11px;
  padding-right: 22px;
  color: #ccc;
}
.cb-right .pair + .plain { margin-left: 6px; }

/* workspace */
.workspace { display: flex; min-height: 0; background: var(--dark); }
.toolbar { width: 45px; background: var(--panel); border-right: 2px solid var(--line); border-left: 4px solid #484848; }
.bar-head { height: 12px; display: flex; align-items: center; padding: 0 6px 0 4px; background: var(--dark); }
.bar-head.end { justify-content: flex-end; }
.grip { display: block; width: 20px; height: 4px; margin: 4px auto 12px; background: var(--line); }
.tools { display: grid; justify-content: center; }
.tool {
  width: 28px;
  height: 24px;
  border: 0;
  padding: 0;
  background: none;
  color: #d0d0d0;
  display: grid;
  place-items: center;
  position: relative;
}
.tool svg { width: 18px; height: 18px; }
.tool.on { background: #2a2a2a; height: 22px; margin: 1px 0; }
.tool.more::after {
  content: "";
  position: absolute;
  right: 0;
  bottom: 0;
  border-left: 4px solid transparent;
  border-bottom: 4px solid #ccc;
}
.colors { width: 30px; height: 130px; margin: 4px 0 0 5px; }

.document { flex: 1; min-width: 0; display: flex; flex-direction: column; }
.tabs { height: 30px; display: flex; background: var(--dark); }
.tab {
  display: flex;
  align-items: center;
  gap: 14px;
  padding: 0 5px 2px 10px;
  background: var(--panel);
  font-size: 13px;
}
.view { flex: 1; min-height: 0; display: flex; }
.canvas { flex: 1; position: relative; background: var(--canvas); overflow: hidden; }
.artboard {
  position: absolute;
  left: 345px;
  top: 26px;
  width: 1125px;
  height: 870px;
  background: #fdfdfb;
  border: 1px solid #111;
}
.shape { position: absolute; width: 419px; height: 283px; border: 1px solid #222; }
.shape.a, .shape.c { left: 100px; }
.shape.b, .shape.d { left: 610px; }
.shape.a, .shape.b { top: 89px; }
.shape.c, .shape.d { top: 457px; }
.shape.selected { border: 2px solid #4f6db5; }
.handles { overflow: visible; width: calc(100% + 3px); height: calc(100% + 3px); margin: -1px 0 0 -1px; }
.hn rect { fill: #fff; stroke: #4a6cc0; transform: translate(-4px, -4px); }
.mid-dot { fill: #4677f5; }
.widget {
  position: absolute;
  width: 9px;
  height: 9px;
  border: 1px solid #4a76d8;
  border-radius: 50%;
  background: radial-gradient(#4a76d8 2px, #fff 3px);
}
.tl, .tr { top: 8px; }
.bl, .br { bottom: 8px; }
.tl, .bl { left: 8px; }
.tr, .br { right: 9px; }
.vscroll {
  width: 17px;
  background: #494949;
  display: flex;
  flex-direction: column;
  justify-content: space-between;
  align-items: center;
  padding: 4px 0 2px;
  color: #999;
}
.status { height: 20px; display: flex; border-bottom: 4px solid var(--panel); background: var(--dark); }
.status-info {
  width: 506px;
  padding-left: 231px;
  display: flex;
  align-items: center;
  gap: 12px;
  background: #4a4a4a;
}
.status-info .nav2 { width: 30px; height: 10px; }
.status-text { flex: 1; text-align: center; }
.hscroll { flex: 1; display: flex; align-items: center; padding-left: 4px; background: #494949; }
.thumb { width: 24px; height: 15px; margin-left: 628px; border-radius: 8px; background: #666; }

/* dock */
.dock { width: 43px; background: var(--panel); border-left: 1px solid var(--line); border-right: 5px solid #464646; }
.dock-group {
  display: grid;
  justify-items: center;
  gap: 8px;
  padding: 14px 0 6px;
  border-bottom: 1px solid #383838;
  color: #d4d4d4;
  background: linear-gradient(var(--line), var(--line)) center 4px / 18px 4px no-repeat;
}
.dock-group:last-child { padding: 11px 0 4px; border: 0; }
.js {
  width: 24px;
  height: 24px;
  border: 2px solid #ddd;
  padding: 6px 0 0 6px;
  background: var(--dark);
  font: 700 10px/12px var(--ui);
}

/* transform panel */
.transform-panel {
  position: absolute;
  left: 20px;
  bottom: 40px;
  width: 232px;
  height: 270px;
  background: var(--panel);
  border: 1px solid var(--line);
  border-top: 0;
  border-bottom: 0;
  border-radius: 3px 3px 0 0;
  overflow: hidden;
  color: #ccc;
}
.tp-head { height: 14px; display: flex; justify-content: flex-end; align-items: center; gap: 8px; padding: 2px 3px 0 0; background: #3e3e3e; }
.tp-tabs { height: 27px; display: flex; background: var(--dark); }
.tp-tab { border: 0; padding: 0 9px 2px; background: none; color: #aaa; display: flex; align-items: center; gap: 7px; }
.tp-tab.on { padding: 0 9px 2px 3px; background: var(--panel); color: #fff; }
.ud { width: 6px; height: 10px; }
.tp-menu { margin: 0 6px 0 auto; }
.tp-pos { display: flex; align-items: center; padding: 6px 8px 0 4px; }
.pos-grid {
  display: grid;
  grid-template-columns: 20px 56px 31px 56px;
  row-gap: 5px;
  margin-left: 8px;
}
.pos-grid label { font: 10px/20px var(--mono); padding-left: 5px; white-space: nowrap; }
.unlink { margin-left: auto; }
.tp-angle {
  display: grid;
  grid-template-columns: 20px 56px 25px 56px;
  align-items: center;
  padding: 6px 0 9px 32px;
  border-bottom: 1px solid #474747;
}
.combo { display: flex; height: 20px; background: var(--field); }
.combo .plain { width: 20px; flex: none; border-left: 1px solid var(--panel); }
.tp-title { margin: 9px 0 4px 10px; font: 12px/16px var(--ui); }
.tp-props, .tp-corners {
  display: grid;
  grid-template-columns: 32px 56px 38px 56px 24px;
  align-items: center;
  padding-left: 6px;
}
.tp-props > svg, .tp-corners > svg, .tp-props > .linkbtn { justify-self: center; }
.tp-props { row-gap: 7px; }
.tp-corners { row-gap: 11px; padding-top: 8px; }
.tp-corners > .linkbtn { grid-row: 1 / 3; grid-column: 3; justify-self: center; }
.radius { display: flex; align-items: center; gap: 4px; padding-left: 4px; color: #fff; }
.radius.last { grid-column: 4; }

/* scripts panel */
.scripts-panel {
  position: absolute;
  right: 43px;
  bottom: 138px;
  width: 352px;
  height: 490px;
  display: flex;
  flex-direction: column;
  background: var(--panel);
  border: 1px solid #444;
  font-family: Roboto, "Noto Sans CJK SC", sans-serif;
  font-weight: 500;
  color: #fff;
}
.sp-head { height: 31px; display: flex; justify-content: space-between; align-items: center; padding-right: 6px; background: var(--dark); border-bottom: 1px solid #111; }
.sp-tab { height: 26px; border: 0; padding: 0 9px 0 11px; background: var(--panel); color: #eee; font: 12px/16px var(--ui); }
.sp-brand { height: 21px; display: flex; align-items: center; gap: 8px; padding: 0 6px 0 10px; background: linear-gradient(#4a4a4a, #262626); border-bottom: 1px solid #111; }
.opts { margin-left: auto; }
.sp-path { display: flex; padding: 3px 4px 0 5px; }
.path { flex: 1; min-width: 0; height: 25px; border: 1px solid #111; padding: 0 4px; background: #484848; font-size: 13px; }
.pick { width: 70px; border: 1px solid #111; border-left: 0; background: linear-gradient(#5a5a5a, #444); }
.tree { flex: 1; margin: 0; padding: 5px 2px 0 22px; list-style: none; }
.row { height: 22px; display: flex; align-items: center; gap: 6px; }
.row.l1 { margin-left: -10px; }
.row.l2 { padding-left: 10px; }
.row.current { background: #44505a; }
.num { width: 10px; text-align: center; color: #9ab; }
.bar { height: 11px; display: grid; place-items: center; background: #262626; }
.sp-search { height: 29px; display: flex; align-items: center; gap: 20px; padding-right: 12px; border: solid #111; border-width: 1px 0; background: var(--dark); color: #ccc; }
.tool-l { width: 39px; }
.find { flex: 1; min-width: 0; height: 27px; margin-left: -20px; margin-right: -10px; border: solid #222; border-width: 0 1px; padding: 0 5px 6px; background: #444; font-size: 13px; }
.find::placeholder { color: #7c7c7c; opacity: 1; }
.error {
  margin: 0;
  padding: 0 60px 0 5px;
  line-height: 16px;
  background: linear-gradient(#12c0f5, #12c0f5) right top / 5px 14px no-repeat;
}
.sp-foot { height: 5px; border-top: 1px solid #3c3c3c; background: linear-gradient(#3a3a3a, #3a3a3a) center / 18px 3px no-repeat; }

.cursor { position: absolute; right: 214px; bottom: 467px; width: 12px; height: 18px; }

/* input method bar */
.ime {
  position: absolute;
  right: 1px;
  bottom: 41px;
  height: 25px;
  padding: 0 4px 0 28px;
  display: flex;
  align-items: center;
  gap: 8px;
  background: #fff;
  color: #1173c7;
}
.ime .plain { width: 16px; }
.ime .zh { font-size: 16px; font-weight: 700; margin-left: 5px; }
.ime-logo { position: absolute; left: -5px; bottom: 0; width: 32px; height: 30px; }

/* taskbar */
.taskbar {
  display: flex;
  align-items: center;
  background: linear-gradient(90deg, #1a2a2e, #222a2c 12%, #1d323e 30%, #1b2e3e 70%, #1a2636);
  color: #fff;
}
.task { width: 48px; height: 40px; }
.task.active { background: #4a4e52; border-bottom: 2px solid #76b9ed; margin-left: 3px; }
.tray { margin-left: auto; display: flex; align-items: center; gap: 8px; }
.ime-zh { width: 16px; font-size: 14px; text-align: center; }
.tray .i16:last-child { margin-left: 4px; }
.clock { width: 64px; margin-left: 13px; display: grid; line-height: 19px; text-align: center; }
.note { width: 16px; margin: 0 25px 0 18px; }
```
